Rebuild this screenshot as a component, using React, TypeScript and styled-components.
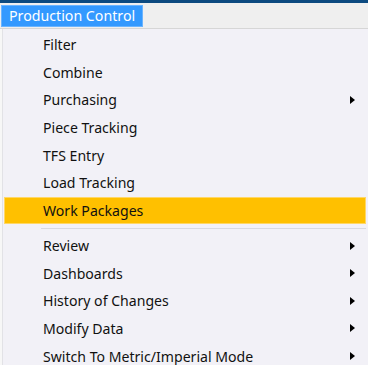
import styled, { createGlobalStyle } from 'styled-components';

const GlobalStyle = createGlobalStyle`
  html, body {
    margin: 0;
    padding: 0;
    background: #f7f7f7;
  }
  body {
    font-family: 'Noto Sans', 'Liberation Sans', sans-serif;
    -webkit-font-smoothing: antialiased;
  }
`;

type Entry = { label: string; submenu?: boolean } | 'separator';

const entries: Entry[] = [
  { label: 'Filter' },
  { label: 'Combine' },
  { label: 'Purchasing', submenu: true },
  { label: 'Piece Tracking' },
  { label: 'TFS Entry' },
  { label: 'Load Tracking' },
  { label: 'Work Packages' },
  'separator',
  { label: 'Review', submenu: true },
  { label: 'Dashboards', submenu: true },
  { label: 'History of Changes', submenu: true },
  { label: 'Modify Data', submenu: true },
  { label: 'Switch To Metric/Imperial Mode', submenu: true },
];

const ACTIVE = 'Work Packages';

const Arrow = () => (
  <svg width="5" height="8" viewBox="0 0 5 8">
    <path d="M0 0 L5 4 L0 8 Z" fill="#000" />
  </svg>
);

const App = () => {
  const items = entries.map((entry, i) => {
    if (entry === 'separator') {
      return (
        <Separator key={i}>
          <SeparatorLine />
        </Separator>
      );
    }
    return (
      <Item key={entry.label} active={entry.label === ACTIVE}>
        <Label>{entry.label}</Label>
        <ArrowSlot>{entry.submenu && <Arrow />}</ArrowSlot>
      </Item>
    );
  });

  return (
    <Page>
      <GlobalStyle />
      <TitleStrip />
      <MenuBar>
        <MenuTitle>Production Control</MenuTitle>
      </MenuBar>
      <Dropdown>{items}</Dropdown>
    </Page>
  );
};

const Page = styled.div`
  width: 368px;
  height: 365px;
  overflow: hidden;
  display: flex;
  flex-direction: column;
`;

const TitleStrip = styled.div`
  height: 3px;
  background: #0c4a80;
  flex-shrink: 0;
`;

const MenuBar = styled.div`
  height: 25px;
  flex-shrink: 0;
  display: flex;
  align-items: center;
  padding-left: 1px;
  background: #efefef;
  border-bottom: 1px solid #d6d6d6;
`;

const MenuTitle = styled.div`
  height: 22px;
  box-sizing: border-box;
  padding: 0 7px 0 7px;
  display: flex;
  align-items: center;
  background: #3399ff;
  border: 1px solid #6ab4ff;
  color: #fff;
  font-size: 14.2px;
`;

const Dropdown = styled.div`
  flex: 1;
  margin-left: 2px;
  padding: 2px 2px 0 1px;
  background: #f2f1f7;
  border-left: 1px solid #e2e2e6;
  display: flex;
  flex-direction: column;
`;

const Item = styled.div<{ active: boolean }>`
  height: 27.6px;
  flex-shrink: 0;
  box-sizing: border-box;
  display: flex;
  align-items: center;
  padding-left: 38px;
  background: ${(p) => (p.active ? '#ffc000' : 'transparent')};
  border: 1px solid ${(p) => (p.active ? '#ffd766' : 'transparent')};
`;

const Label = styled.span`
  flex: 1;
  font-size: 14.1px;
  color: #111;
`;

const ArrowSlot = styled.span`
  width: 15px;
  display: flex;
  align-items: center;
`;

const Separator = styled.div`
  height: 7.7px;
  flex-shrink: 0;
  display: flex;
  align-items: center;
  padding-left: 37px;
`;

const SeparatorLine = styled.div`
  flex: 1;
  height: 1px;
  background: #d9d9de;
`;

export default App;
